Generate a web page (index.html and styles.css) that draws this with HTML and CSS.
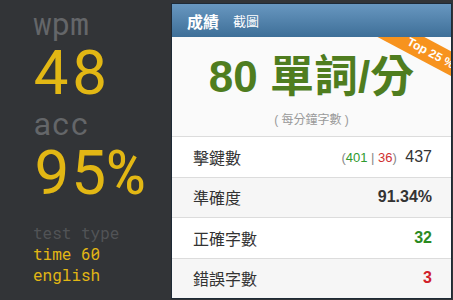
FILE: index.html
```html
<!DOCTYPE html>
<html lang="zh-Hant">
<head>
  <meta charset="UTF-8" />
  <meta name="viewport" content="width=device-width, initial-scale=1.0" />
  <title>成績</title>
  <link rel="stylesheet" href="styles.css">
</head>
<body>
  <section class="stats">
    <div class="group">
      <div class="top">wpm</div>
      <div class="bottom">48</div>
    </div>
    <div class="group">
      <div class="top">acc</div>
      <div class="bottom">95%</div>
    </div>
    <div class="test-type">
      <div class="label">test type</div>
      <div class="value">time 60</div>
      <div class="value">english</div>
    </div>
  </section>

  <main class="card">
    <header class="card-head">
      <span class="title">成績</span>
      <span class="shot">截圖</span>
    </header>

    <div class="speed">
      <div class="ribbon">Top 25 %</div>
      <div class="speed-num">80 單詞/分</div>
      <div class="speed-note">( 每分鐘字數 )</div>
    </div>

    <div class="row">
      <span class="name">擊鍵數</span>
      <span class="val"><span class="split">(<span class="ok">401</span> | <span class="bad">36</span>)</span> 437</span>
    </div>
    <div class="row alt">
      <span class="name">準確度</span>
      <span class="val strong">91.34%</span>
    </div>
    <div class="row">
      <span class="name">正確字數</span>
      <span class="val strong green">32</span>
    </div>
    <div class="row alt">
      <span class="name">錯誤字數</span>
      <span class="val strong red">3</span>
    </div>
  </main>
</body>
</html>
```

FILE: styles.css
```css
body {
  margin: 0;
  height: 300px;
  overflow: hidden;
  background-color: #323437;
  display: flex;
}

.stats {
  width: 138px;
  padding: 8px 0 0 33px;
  font-family: 'Roboto Mono', 'DejaVu Sans Mono', monospace;
}

.group .top {
  font-size: 31px;
  line-height: 31px;
  color: #646669;
}

.group .bottom {
  font-size: 62px;
  line-height: 62px;
  color: #e2b714;
  margin-bottom: 7px;
}

.test-type {
  margin-top: 21px;
  font-size: 16px;
  line-height: 21px;
}

.test-type .label {
  color: #515356;
}

.test-type .value {
  color: #e2b714;
}

.card {
  margin-top: 3px;
  width: 281px;
  height: 296px;
  box-sizing: border-box;
  border: 1px solid #1e2a36;
  background-color: #fafafa;
  display: flex;
  flex-direction: column;
  font-family: 'Liberation Sans', 'Noto Sans CJK TC', sans-serif;
}

.card-head {
  height: 33px;
  display: flex;
  align-items: center;
  gap: 14px;
  padding-left: 15px;
  background: linear-gradient(#6897c0, #3e6f98);
  color: #fff;
  position: relative;
  z-index: 2;
}

.card-head .title {
  font-size: 16px;
  font-weight: bold;
}

.card-head .shot {
  font-size: 13px;
}

.speed {
  position: relative;
  overflow: hidden;
  height: 99px;
  border-bottom: 1px solid #dcdcdc;
  display: flex;
  flex-direction: column;
  align-items: center;
}

.ribbon {
  position: absolute;
  left: 179px;
  top: 5px;
  width: 160px;
  height: 22px;
  line-height: 22px;
  text-align: center;
  background-color: #f7931e;
  color: #fff;
  font-size: 12px;
  font-weight: bold;
  transform: rotate(28deg);
}

.speed-num {
  margin-top: 16px;
  font-size: 44px;
  font-weight: bold;
  line-height: 48px;
  color: #4f7d1f;
}

.speed-note {
  margin-top: 9px;
  font-size: 12px;
  color: #999;
}

.row {
  flex: 1;
  display: flex;
  justify-content: space-between;
  align-items: center;
  padding: 0 19px 0 21px;
  border-bottom: 1px solid #dcdcdc;
  font-size: 16px;
  color: #333;
  background-color: #fff;
}

.row:last-child {
  border-bottom: none;
}

.row.alt {
  background-color: #f6f6f6;
}

.val.strong {
  font-weight: bold;
}

.val.green {
  color: #2b8a1f;
}

.val.red {
  color: #d0202a;
}

.split {
  font-size: 13px;
  color: #888;
  margin-right: 4px;
}

.split .ok {
  color: #2f9a2f;
}

.split .bad {
  color: #d03030;
}
```
